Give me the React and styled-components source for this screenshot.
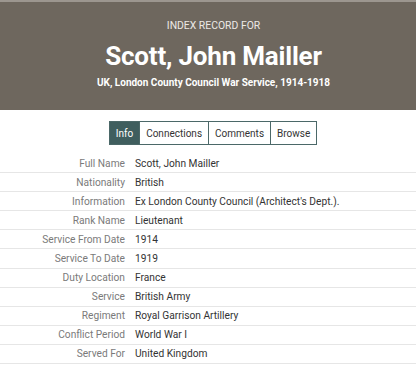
import React from "react";
import styled, { createGlobalStyle } from "styled-components";

const GlobalStyle = createGlobalStyle`
  body {
    margin: 0;
    background: #fff;
    font-family: Roboto, "Liberation Sans", sans-serif;
  }
`;

const fields = [
  ["Full Name", "Scott, John Mailler"],
  ["Nationality", "British"],
  ["Information", "Ex London County Council (Architect's Dept.)."],
  ["Rank Name", "Lieutenant"],
  ["Service From Date", "1914"],
  ["Service To Date", "1919"],
  ["Duty Location", "France"],
  ["Service", "British Army"],
  ["Regiment", "Royal Garrison Artillery"],
  ["Conflict Period", "World War I"],
  ["Served For", "United Kingdom"],
];

const tabs = ["Info", "Connections", "Comments", "Browse"];

const App = () => {
  return (
    <>
      <GlobalStyle />
      <Header>
        <Kicker>INDEX RECORD FOR</Kicker>
        <Title>Scott, John Mailler</Title>
        <Collection>UK, London County Council War Service, 1914-1918</Collection>
      </Header>
      <TabBar>
        {tabs.map((t, i) => (
          <Tab key={t} $active={i === 0}>
            {t}
          </Tab>
        ))}
      </TabBar>
      <Table>
        {fields.map(([label, value]) => (
          <Row key={label}>
            <Label>{label}</Label>
            <Value>{value}</Value>
          </Row>
        ))}
      </Table>
    </>
  );
};

const Header = styled.div`
  background: #6e675e;
  border-top: 2px solid #9c968f;
  height: 108px;
  box-sizing: content-box;
  padding-left: 11px;
  display: flex;
  flex-direction: column;
  align-items: center;
  color: #fff;
`;

const Kicker = styled.div`
  margin-top: 17px;
  font-size: 10.4px;
  color: #ece9e5;
`;

const Title = styled.h1`
  margin: 8px 0 0;
  font-size: 26px;
  font-weight: 700;
  letter-spacing: -0.2px;
  line-height: 33px;
`;

const Collection = styled.div`
  margin-top: 4px;
  font-size: 10px;
  font-weight: 700;
`;

const TabBar = styled.div`
  display: flex;
  justify-content: center;
  padding-left: 11px;
  margin-top: 11px;
  margin-bottom: 9px;
`;

const Tab = styled.div`
  height: 22px;
  padding: 0 6px;
  display: flex;
  align-items: center;
  font-size: 10px;
  border: 1px solid #4b6868;
  margin-left: -1px;
  color: ${(p) => (p.$active ? "#fff" : "#333")};
  background: ${(p) => (p.$active ? "#3f5e5e" : "#fff")};
`;

const Table = styled.div`
  display: flex;
  flex-direction: column;
`;

const Row = styled.div`
  display: grid;
  grid-template-columns: 125px 1fr;
  column-gap: 10px;
  align-items: center;
  height: 19.1px;
  border-bottom: 1px solid #e6e6e6;
  box-sizing: border-box;
  font-size: 10.2px;
`;

const Label = styled.div`
  text-align: right;
  color: #7a7a7a;
`;

const Value = styled.div`
  color: #333;
`;

export default App;
